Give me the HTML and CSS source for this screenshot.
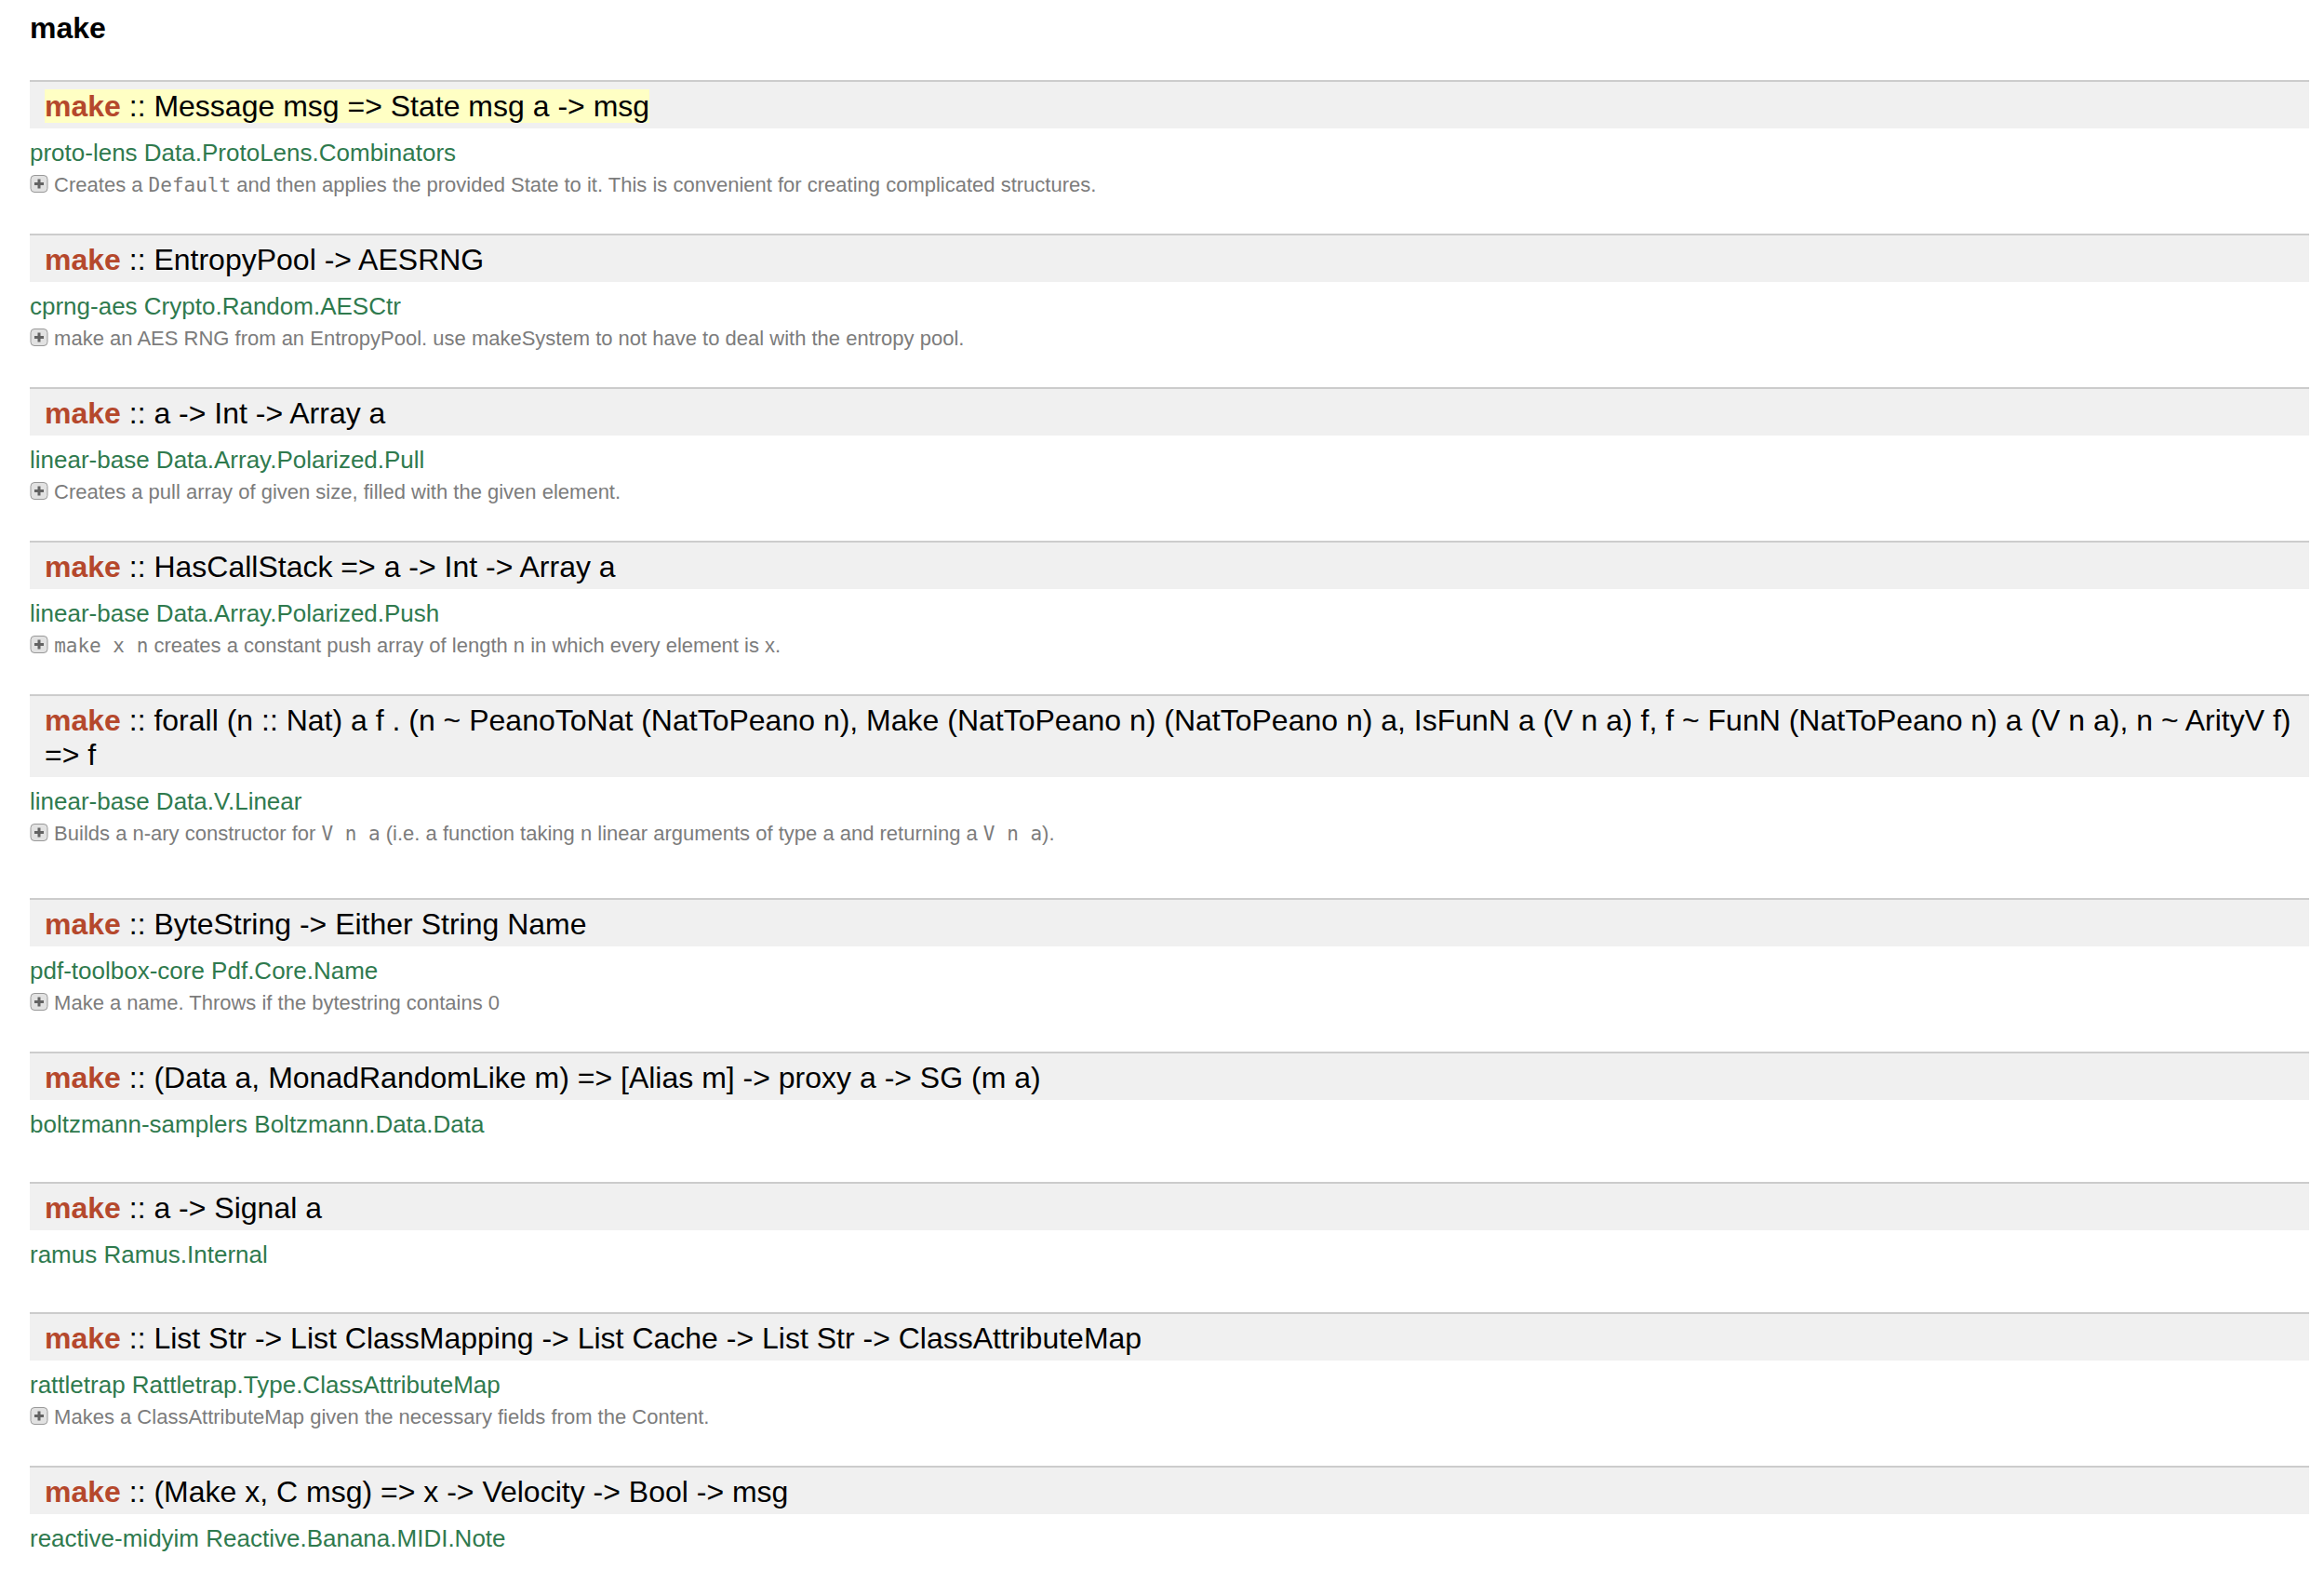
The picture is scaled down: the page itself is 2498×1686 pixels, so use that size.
FILE: index.html
```html
<!DOCTYPE html>
<html>
<head>
<meta charset="utf-8">
<title>make - Hoogle</title>
<link rel="stylesheet" href="styles.css">
</head>
<body>
<div class="page">
  <h1 class="title">make</h1>

  <div class="result">
    <div class="sig"><span class="sel"><span class="name">make</span> :: Message msg =&gt; State msg a -&gt; msg</span></div>
    <div class="pkg">proto-lens Data.ProtoLens.Combinators</div>
    <div class="doc"><svg class="plus" width="20" height="19" viewBox="0 0 20 19"><rect x="1" y="0.5" width="18" height="18" rx="4" fill="#e2e2e2" stroke="#999999"/><path d="M10 4.5v10M5 9.5h10" stroke="#636363" stroke-width="3"/></svg> Creates a <code>Default</code> and then applies the provided State to it. This is convenient for creating complicated structures.</div>
  </div>

  <div class="result">
    <div class="sig"><span class="name">make</span> :: EntropyPool -&gt; AESRNG</div>
    <div class="pkg">cprng-aes Crypto.Random.AESCtr</div>
    <div class="doc"><svg class="plus" width="20" height="19" viewBox="0 0 20 19"><rect x="1" y="0.5" width="18" height="18" rx="4" fill="#e2e2e2" stroke="#999999"/><path d="M10 4.5v10M5 9.5h10" stroke="#636363" stroke-width="3"/></svg> make an AES RNG from an EntropyPool. use makeSystem to not have to deal with the entropy pool.</div>
  </div>

  <div class="result">
    <div class="sig"><span class="name">make</span> :: a -&gt; Int -&gt; Array a</div>
    <div class="pkg">linear-base Data.Array.Polarized.Pull</div>
    <div class="doc"><svg class="plus" width="20" height="19" viewBox="0 0 20 19"><rect x="1" y="0.5" width="18" height="18" rx="4" fill="#e2e2e2" stroke="#999999"/><path d="M10 4.5v10M5 9.5h10" stroke="#636363" stroke-width="3"/></svg> Creates a pull array of given size, filled with the given element.</div>
  </div>

  <div class="result">
    <div class="sig"><span class="name">make</span> :: HasCallStack =&gt; a -&gt; Int -&gt; Array a</div>
    <div class="pkg">linear-base Data.Array.Polarized.Push</div>
    <div class="doc"><svg class="plus" width="20" height="19" viewBox="0 0 20 19"><rect x="1" y="0.5" width="18" height="18" rx="4" fill="#e2e2e2" stroke="#999999"/><path d="M10 4.5v10M5 9.5h10" stroke="#636363" stroke-width="3"/></svg> <code>make x n</code> creates a constant push array of length n in which every element is x.</div>
  </div>

  <div class="result result-tall">
    <div class="sig"><span class="name">make</span> :: forall (n :: Nat) a f . (n ~ PeanoToNat (NatToPeano n), Make (NatToPeano n) (NatToPeano n) a, IsFunN a (V n a) f, f ~ FunN (NatToPeano n) a (V n a), n ~ ArityV f) =&gt; f</div>
    <div class="pkg">linear-base Data.V.Linear</div>
    <div class="doc"><svg class="plus" width="20" height="19" viewBox="0 0 20 19"><rect x="1" y="0.5" width="18" height="18" rx="4" fill="#e2e2e2" stroke="#999999"/><path d="M10 4.5v10M5 9.5h10" stroke="#636363" stroke-width="3"/></svg> Builds a n-ary constructor for <code>V n a</code> (i.e. a function taking n linear arguments of type a and returning a <code>V n a</code>).</div>
  </div>

  <div class="result">
    <div class="sig"><span class="name">make</span> :: ByteString -&gt; Either String Name</div>
    <div class="pkg">pdf-toolbox-core Pdf.Core.Name</div>
    <div class="doc"><svg class="plus" width="20" height="19" viewBox="0 0 20 19"><rect x="1" y="0.5" width="18" height="18" rx="4" fill="#e2e2e2" stroke="#999999"/><path d="M10 4.5v10M5 9.5h10" stroke="#636363" stroke-width="3"/></svg> Make a name. Throws if the bytestring contains 0</div>
  </div>

  <div class="result result-nodoc">
    <div class="sig"><span class="name">make</span> :: (Data a, MonadRandomLike m) =&gt; [Alias m] -&gt; proxy a -&gt; SG (m a)</div>
    <div class="pkg">boltzmann-samplers Boltzmann.Data.Data</div>
  </div>

  <div class="result result-nodoc">
    <div class="sig"><span class="name">make</span> :: a -&gt; Signal a</div>
    <div class="pkg">ramus Ramus.Internal</div>
  </div>

  <div class="result">
    <div class="sig"><span class="name">make</span> :: List Str -&gt; List ClassMapping -&gt; List Cache -&gt; List Str -&gt; ClassAttributeMap</div>
    <div class="pkg">rattletrap Rattletrap.Type.ClassAttributeMap</div>
    <div class="doc"><svg class="plus" width="20" height="19" viewBox="0 0 20 19"><rect x="1" y="0.5" width="18" height="18" rx="4" fill="#e2e2e2" stroke="#999999"/><path d="M10 4.5v10M5 9.5h10" stroke="#636363" stroke-width="3"/></svg> Makes a ClassAttributeMap given the necessary fields from the Content.</div>
  </div>

  <div class="result result-nodoc">
    <div class="sig"><span class="name">make</span> :: (Make x, C msg) =&gt; x -&gt; Velocity -&gt; Bool -&gt; msg</div>
    <div class="pkg">reactive-midyim Reactive.Banana.MIDI.Note</div>
  </div>
</div>
</body>
</html>
```

FILE: styles.css
```css
html, body {
  margin: 0;
  padding: 0;
  background: #ffffff;
}

body {
  font-family: "Liberation Sans", Arial, Helvetica, sans-serif;
  color: #000000;
}

.page {
  padding: 0 16px 0 32px;
}

.title {
  margin: 0 0 37px 0;
  padding-top: 11px;
  font-size: 32px;
  line-height: 38px;
  font-weight: bold;
  color: #000000;
}

.result {
  margin-bottom: 41px;
}

.result-nodoc {
  margin-bottom: 46px;
}

.result-tall {
  padding-bottom: 17px;
}

.sig {
  border-top: 2px solid #cccccc;
  background: #f0f0f0;
  padding: 8px 16px 5px 16px;
  font-size: 32px;
  line-height: 37px;
  color: #000000;
}

.sel {
  background: #ffffc4;
}

.name {
  color: #b5482c;
  font-weight: bold;
}

.pkg {
  margin-top: 11px;
  margin-bottom: 8px;
  font-size: 26px;
  line-height: 31px;
  color: #2f7a4e;
}

.doc {
  font-size: 22px;
  line-height: 22px;
  color: #7c7c7c;
}

.doc code {
  font-family: "DejaVu Sans Mono", "Liberation Mono", monospace;
  font-size: 21px;
  color: #7c7c7c;
}

.plus {
  vertical-align: -1px;
}
```
